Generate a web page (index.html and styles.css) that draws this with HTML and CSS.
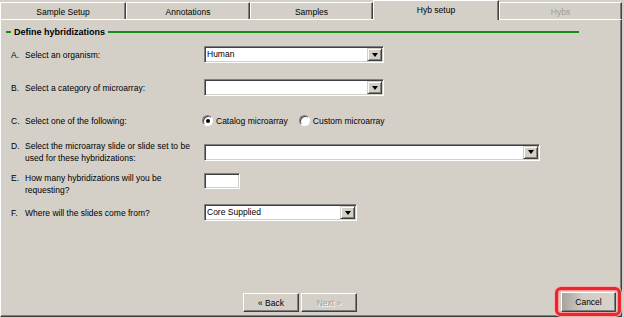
FILE: index.html
```html
<!DOCTYPE html>
<html>
<head>
<meta charset="utf-8">
<link rel="stylesheet" href="styles.css">
</head>
<body>
<div class="window">
  <div class="tabs">
    <div class="tab t1">Sample Setup</div>
    <div class="tab t2">Annotations</div>
    <div class="tab t3">Samples</div>
    <div class="tab t4 active">Hyb setup</div>
    <div class="tab t5 disabled">Hybs</div>
  </div>
  <div class="panel">
    <div class="legend">
      <span class="gline short"></span>
      <span class="legend-text">Define hybridizations</span>
      <span class="gline long"></span>
    </div>

    <div class="row ra">
      <div class="label"><span class="letter">A.</span><span>Select an organism:</span></div>
      <div class="select w180"><span class="value">Human</span><span class="arrow"><i></i></span></div>
    </div>

    <div class="row rb">
      <div class="label"><span class="letter">B.</span><span>Select a category of microarray:</span></div>
      <div class="select w180"><span class="value"></span><span class="arrow"><i></i></span></div>
    </div>

    <div class="row rc">
      <div class="label"><span class="letter">C.</span><span>Select one of the following:</span></div>
      <div class="radios">
        <span class="radio checked"></span><span class="rlabel">Catalog microarray</span>
        <span class="radio"></span><span class="rlabel">Custom microarray</span>
      </div>
    </div>

    <div class="row rd">
      <div class="label"><span class="letter">D.</span><span>Select the microarray slide or slide set to be used for these hybridizations:</span></div>
      <div class="select w336"><span class="value"></span><span class="arrow"><i></i></span></div>
    </div>

    <div class="row re">
      <div class="label"><span class="letter">E.</span><span>How many hybridizations will you be requesting?</span></div>
      <div class="input"></div>
    </div>

    <div class="row rf">
      <div class="label"><span class="letter">F.</span><span>Where will the slides come from?</span></div>
      <div class="select w153"><span class="value">Core Supplied</span><span class="arrow"><i></i></span></div>
    </div>

    <div class="footer">
      <div class="btn">&laquo; Back</div>
      <div class="btn disabled">Next &raquo;</div>
      <div class="cancel-wrap">
        <div class="btn cancel">Cancel</div>
        <div class="highlight"></div>
      </div>
    </div>
  </div>
</div>
</body>
</html>
```

FILE: styles.css
```css
html, body {
  margin: 0;
  padding: 0;
  background: #d4d0c8;
}
body {
  font-family: "Liberation Sans", Arial, sans-serif;
  font-size: 8.5px;
  color: #000;
  width: 624px;
  height: 318px;
  overflow: hidden;
}
.window {
  width: 622px;
  display: flex;
  flex-direction: column;
}
.tabs {
  display: flex;
  height: 19px;
  align-items: flex-end;
}
.tab {
  box-sizing: border-box;
  height: 17px;
  border-top: 1px solid #fff;
  border-left: 1px solid #fff;
  border-right: 1px solid #404040;
  box-shadow: inset -1px 0 0 #808080;
  display: flex;
  align-items: center;
  justify-content: center;
  padding-top: 1px;
}
.t1 { width: 126px; }
.t2 { width: 124px; }
.t3 { width: 123px; }
.t4 { width: 126px; }
.t5 { width: 123px; }
.tab.active {
  height: 20px;
  margin-bottom: -1px;
  background: #d4d0c8;
  position: relative;
  z-index: 1;
  padding-bottom: 3px;
}
.tab.disabled {
  color: #a09c94;
}
.panel {
  box-sizing: border-box;
  height: 298px;
  border-top: 1px solid #fff;
  border-left: 1px solid #fff;
  border-right: 1px solid #404040;
  border-bottom: 1px solid #404040;
  box-shadow: inset -1px -1px 0 #808080;
  display: flex;
  flex-direction: column;
}
.legend {
  display: flex;
  align-items: center;
  height: 12px;
  margin: 6px 0 0 5px;
  width: 573px;
  gap: 3px;
}
.gline {
  height: 2px;
  background: #168c16;
}
.gline.short { width: 5px; }
.gline.long { flex: 1; }
.legend-text {
  font-weight: bold;
  font-size: 9px;
}
.row {
  display: grid;
  grid-template-columns: 193px auto;
  align-items: center;
  padding-left: 10px;
}
.ra { margin-top: 8px; }
.rb { margin-top: 16px; }
.rc { margin-top: 16px; height: 17px; }
.rd { margin-top: 11px; }
.re { margin-top: 8px; align-items: start; }
.rf { margin-top: 8px; }
.label {
  display: grid;
  grid-template-columns: 14px auto;
  line-height: 12px;
  padding-right: 40px;
}
.rd .label { padding-right: 0; }
.re .label { padding-right: 35px; }
.select {
  box-sizing: border-box;
  height: 17px;
  background: #fff;
  border-top: 1px solid #808080;
  border-left: 1px solid #808080;
  border-right: 1px solid #fff;
  border-bottom: 1px solid #fff;
  box-shadow: inset 1px 1px 0 #404040, inset -1px -1px 0 #d4d0c8;
  display: flex;
  align-items: center;
  padding: 1px 1px 1px 2px;
}
.w180 { width: 180px; }
.w336 { width: 336px; }
.w153 { width: 153px; }
.value {
  flex: 1;
  line-height: 13px;
}
.arrow {
  box-sizing: border-box;
  width: 15px;
  height: 13px;
  background: #d4d0c8;
  border-top: 1px solid #d4d0c8;
  border-left: 1px solid #d4d0c8;
  border-right: 1px solid #404040;
  border-bottom: 1px solid #404040;
  box-shadow: inset 1px 1px 0 #fff, inset -1px -1px 0 #808080;
  display: flex;
  align-items: center;
  justify-content: center;
}
.arrow i {
  width: 0;
  height: 0;
  border-left: 3.5px solid transparent;
  border-right: 3.5px solid transparent;
  border-top: 4px solid #000;
}
.radios {
  display: flex;
  align-items: center;
  margin-left: -2px;
}
.radio {
  box-sizing: border-box;
  width: 11px;
  height: 11px;
  border-radius: 50%;
  background: #fff;
  border: 1px solid;
  border-color: #808080 #fff #fff #808080;
  box-shadow: inset 1px 1px 0 #404040;
  position: relative;
  margin-right: 3px;
}
.radio.checked::after {
  content: "";
  position: absolute;
  left: 3px;
  top: 3px;
  width: 4px;
  height: 4px;
  border-radius: 50%;
  background: #000;
}
.rlabel { margin-right: 11px; }
.input {
  box-sizing: border-box;
  width: 36px;
  height: 16px;
  margin-top: 1px;
  background: #fff;
  border-top: 1px solid #808080;
  border-left: 1px solid #808080;
  border-right: 1px solid #fff;
  border-bottom: 1px solid #fff;
  box-shadow: inset 1px 1px 0 #404040, inset -1px -1px 0 #d4d0c8;
}
.footer {
  margin-top: auto;
  display: flex;
  align-items: center;
  gap: 2px;
  padding: 0 5px 3px 242px;
}
.btn {
  box-sizing: border-box;
  width: 56px;
  height: 19px;
  border-top: 1px solid #fff;
  border-left: 1px solid #fff;
  border-right: 1px solid #404040;
  border-bottom: 1px solid #404040;
  box-shadow: inset -1px -1px 0 #808080;
  display: flex;
  align-items: center;
  justify-content: center;
  background: #d4d0c8;
}
.btn.disabled {
  color: #a09c94;
  text-shadow: 1px 1px 0 #fff;
}
.cancel-wrap {
  margin-left: auto;
  position: relative;
}
.btn.cancel {
  width: 55px;
  height: 20px;
  margin-bottom: 1px;
  background: linear-gradient(to right, #a8a49c, #d0ccc4 40%, #d8d4cc);
}
.highlight {
  position: absolute;
  left: -6px;
  top: -5px;
  right: -5px;
  bottom: -3px;
  border: 3px solid #e8262b;
  border-radius: 6px;
  box-shadow: inset 0 0 0 1px #f59a9a, 0 0 0 1px #f7b0b0;
}
```
